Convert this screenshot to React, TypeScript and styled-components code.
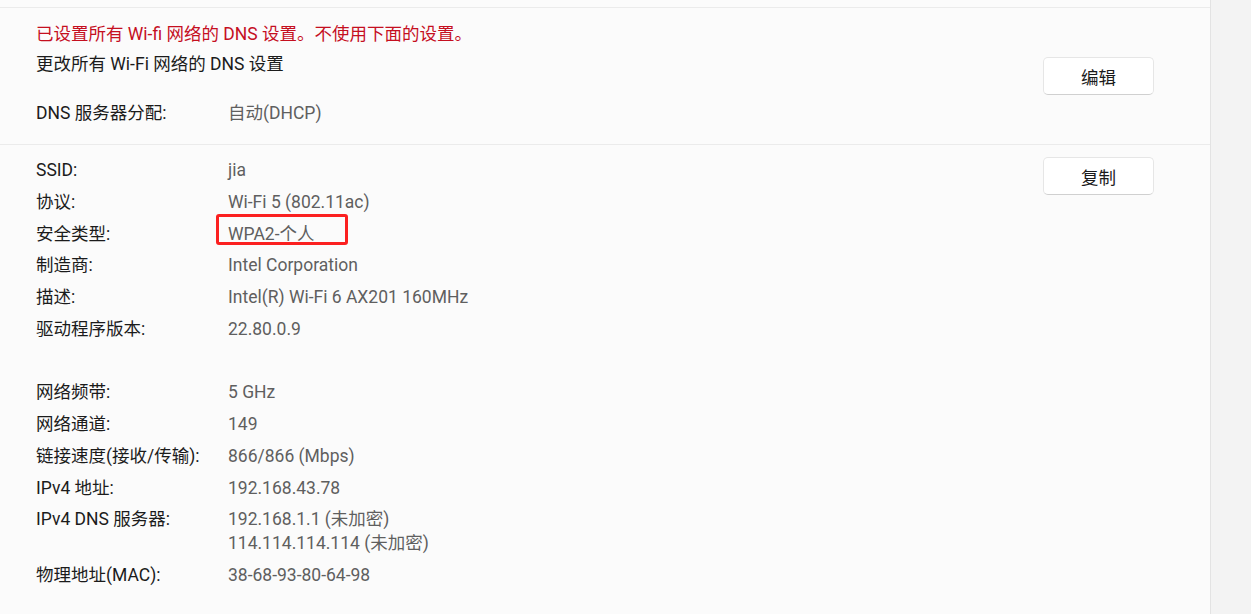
import React from "react";
import styled, { createGlobalStyle } from "styled-components";

const Global = createGlobalStyle`
  html, body { margin: 0; padding: 0; }
  body {
    width: 1251px;
    height: 614px;
    overflow: hidden;
    background: #fbfbfb;
    font-family: "Segoe UI", Roboto, "Noto Sans CJK SC", sans-serif;
    font-size: 17.5px;
    color: #1b1b1b;
  }
`;

const Page = styled.div`
  display: flex;
  width: 1251px;
  height: 614px;
`;

const Main = styled.div`
  width: 1210px;
  flex: none;
  background: #fbfbfb;
  border-right: 1px solid #e3e3e3;
  padding-top: 7px;
  box-sizing: content-box;
`;

const ScrollStrip = styled.div`
  flex: 1;
  background: #f3f3f3;
`;

const Card = styled.section<{ $fixed?: boolean }>`
  display: flex;
  align-items: ${(p) => (p.$fixed ? "center" : "flex-start")};
  border-top: 1px solid #ebebeb;
  padding: 0 56px 0 36px;
  box-sizing: border-box;
  ${(p) => (p.$fixed ? "height: 137px;" : "")}
`;

const Column = styled.div<{ $pt: number; $pb: number }>`
  flex: 1;
  display: flex;
  flex-direction: column;
  padding-top: ${(p) => p.$pt}px;
  padding-bottom: ${(p) => p.$pb}px;
`;

const Line = styled.div<{ $tone?: "warn" | "normal"; $mt?: number }>`
  line-height: 24px;
  white-space: nowrap;
  color: ${(p) => (p.$tone === "warn" ? "#c50f1f" : "#1b1b1b")};
  margin-top: ${(p) => p.$mt ?? 0}px;
`;

const Rows = styled.div`
  display: flex;
  flex-direction: column;
  gap: 8px;
`;

const Row = styled.div<{ $mt?: number }>`
  display: grid;
  grid-template-columns: 192px 1fr;
  line-height: 23.75px;
  min-height: 23.75px;
  margin-top: ${(p) => p.$mt ?? 0}px;
`;

const Label = styled.div`
  color: #1b1b1b;
  white-space: nowrap;
`;

const Value = styled.div`
  position: relative;
  color: #5f5f5f;
  white-space: nowrap;
`;

const Highlight = styled.span`
  position: absolute;
  left: -12px;
  top: -9px;
  width: 132px;
  height: 31px;
  box-sizing: border-box;
  border: 3px solid #fb2020;
  border-radius: 3px;
  pointer-events: none;
`;

const Button = styled.button<{ $mt?: number }>`
  flex: none;
  width: 111px;
  height: 38px;
  margin-top: ${(p) => p.$mt ?? 0}px;
  background: #ffffff;
  border: 1px solid #e6e6e6;
  border-bottom-color: #d0d0d0;
  border-radius: 5px;
  font-family: inherit;
  font-size: 17.5px;
  color: #1b1b1b;
  padding: 0;
  cursor: pointer;
`;

type Item = { label: string; value: string[]; mark?: boolean };

const items: Item[] = [
  { label: "SSID:", value: ["jia"] },
  { label: "协议:", value: ["Wi-Fi 5 (802.11ac)"] },
  { label: "安全类型:", value: ["WPA2-个人"], mark: true },
  { label: "制造商:", value: ["Intel Corporation"] },
  { label: "描述:", value: ["Intel(R) Wi-Fi 6 AX201 160MHz"] },
  { label: "驱动程序版本:", value: ["22.80.0.9"] },
  { label: "", value: [""] },
  { label: "网络频带:", value: ["5 GHz"] },
  { label: "网络通道:", value: ["149"] },
  { label: "链接速度(接收/传输):", value: ["866/866 (Mbps)"] },
  { label: "IPv4 地址:", value: ["192.168.43.78"] },
  { label: "IPv4 DNS 服务器:", value: ["192.168.1.1 (未加密)", "114.114.114.114 (未加密)"] },
  { label: "物理地址(MAC):", value: ["38-68-93-80-64-98"] },
];

export default function App() {
  return (
    <Page>
      <Global />
      <Main>
        <Card $fixed>
          <Column $pt={14} $pb={18}>
            <Line $tone="warn">已设置所有 Wi-fi 网络的 DNS 设置。不使用下面的设置。</Line>
            <Line $mt={6}>更改所有 Wi-Fi 网络的 DNS 设置</Line>
            <Row $mt={26}>
              <Label>DNS 服务器分配:</Label>
              <Value>自动(DHCP)</Value>
            </Row>
          </Column>
          <Button>编辑</Button>
        </Card>
        <Card>
          <Column $pt={14} $pb={0}>
            <Rows>
              {items.map((it, i) => (
                <Row key={i}>
                  <Label>{it.label}</Label>
                  <Value>
                    {it.value.map((v, j) => (
                      <div key={j}>{v || "\u00a0"}</div>
                    ))}
                    {it.mark && <Highlight />}
                  </Value>
                </Row>
              ))}
            </Rows>
          </Column>
          <Button $mt={12}>复制</Button>
        </Card>
      </Main>
      <ScrollStrip />
    </Page>
  );
}
